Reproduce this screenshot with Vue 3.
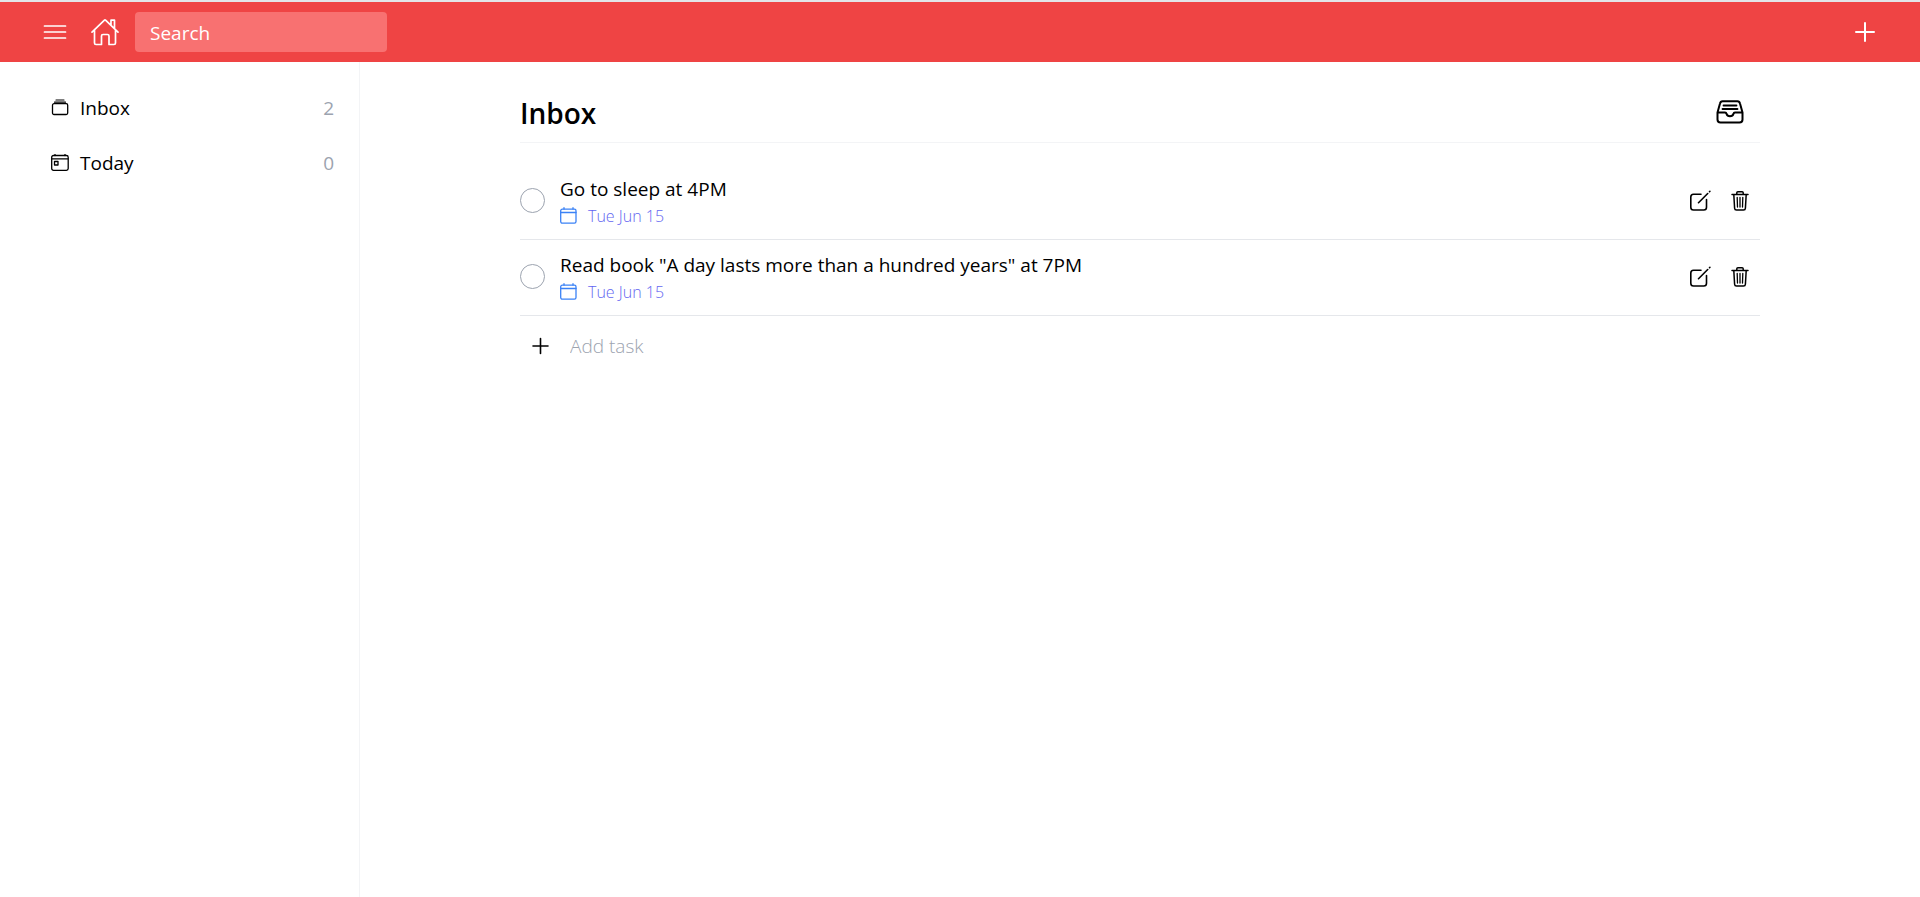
<script setup>
import { ref } from 'vue'

const search = ref('')
const newTask = ref('')
const lists = [
  { name: 'Inbox', count: 2, icon: 'stack' },
  { name: 'Today', count: 0, icon: 'day' },
]
const tasks = ref([
  { id: 1, title: 'Go to sleep at 4PM', date: 'Tue Jun 15', done: false },
  { id: 2, title: 'Read book "A day lasts more than a hundred years" at 7PM', date: 'Tue Jun 15', done: false },
])
</script>

<template>
  <div class="app">
    <header class="topbar">
      <button class="bar-btn menu" type="button" aria-label="Menu">
        <svg width="24" height="20" viewBox="0 0 24 20">
          <path d="M1.500 4h21M1.500 10h21M1.500 16h21" stroke-width="1.7" />
        </svg>
      </button>
      <a class="bar-btn home" href="#" aria-label="Home">
        <svg width="28" height="28" viewBox="0 0 28 28">
          <path d="M1 14.200 13.200 2.400q.8-.8 1.600 0L27 14.200M3.500 12v13q0 1.500 1.500 1.500h5.500v-8.500q0-1.500 1.500-1.500h4.500q1.500 0 1.500 1.500v8.500H23q1.500 0 1.500-1.500V12M20 7V2.200h3.500v8" stroke-width="1.7" />
        </svg>
      </a>
      <input v-model="search" class="search" type="text" placeholder="Search" aria-label="Search" />
      <button class="bar-btn add" type="button" aria-label="New task">
        <svg width="20" height="20" viewBox="0 0 20 20">
          <path d="M10 1v18M1 10h18" stroke-width="2" />
        </svg>
      </button>
    </header>

    <div class="body">
      <nav class="sidebar">
        <a v-for="list in lists" :key="list.name" class="list" href="#">
          <svg v-if="list.icon === 'stack'" width="18" height="18" viewBox="0 0 18 18">
            <path d="M5 1h8M3.500 3.200h11" stroke-width="1.200" />
            <rect x="1.500" y="4.700" width="15.200" height="10.800" rx="1.500" stroke-width="1.300" />
          </svg>
          <svg v-else width="18" height="18" viewBox="0 0 18 18">
            <rect x=".700" y="1.500" width="16.500" height="14.800" rx="1.800" stroke-width="1.300" />
            <path d="M1 4.800h16M4 .5v1M14 .5v1" stroke-width="1.300" />
            <rect x="3.500" y="7.500" width="3.500" height="3.500" stroke-width="1.300" />
          </svg>
          <span class="name">{{ list.name }}</span>
          <span class="count">{{ list.count }}</span>
        </a>
      </nav>

      <main class="main">
        <div class="heading">
          <h1>Inbox</h1>
          <button class="icon-btn tray" type="button" aria-label="Archive">
            <svg width="28" height="24" viewBox="0 0 28 24">
              <path d="M1.500 12.500 4 3.500Q4.500 1.200 6.500 1.200h15q2 0 2.500 2.300l2.500 9v7q0 3-3 3h-19q-3 0-3-3zM1.500 12.500h7.500q1.300 0 1.500 1.300a3.600 3.200 0 0 0 7 0q.2-1.300 1.500-1.300h7.500" stroke-width="2" />
              <path d="M7.500 5.500h13M6.500 9h15" stroke-width="1.800" />
            </svg>
          </button>
        </div>

        <ul class="tasks">
          <li v-for="task in tasks" :key="task.id" class="task">
            <input :id="'task-' + task.id" v-model="task.done" class="check" type="checkbox" />
            <div class="info">
              <label class="title" :for="'task-' + task.id">{{ task.title }}</label>
              <div class="date">
                <svg width="17" height="18" viewBox="0 0 17 18">
                  <rect x=".7" y="2.200" width="15.300" height="14" rx="1.600" stroke-width="1.3" />
                  <path d="M1 5.500h15M4 .7V2M13 .7V2" stroke-width="1.3" />
                </svg>
                <span>{{ task.date }}</span>
              </div>
            </div>
            <button class="icon-btn" type="button" aria-label="Edit task">
              <svg width="22" height="22" viewBox="0 0 22 22">
                <path d="M12 4.200H4.500Q1.800 4.200 1.800 6.900v10.400q0 2.700 2.700 2.700h10.300q2.700 0 2.700-2.700V9.500" stroke-width="1.600" />
                <path d="M9.500 12.700 18.700 3.500M20.500 1.700l.4-.4" stroke-width="1.600" />
              </svg>
            </button>
            <button class="icon-btn" type="button" aria-label="Delete task">
              <svg width="18" height="22" viewBox="0 0 18 22">
                <path d="M1 4.500h16M5.800 4.500V2.800q0-1.100 1.100-1.100h4.200q1.100 0 1.100 1.100v1.700M2.800 4.500l.8 13.700q.1 1.800 1.900 1.800h7q1.800 0 1.900-1.800l.8-13.700" stroke-width="1.500" />
                <path d="M6.200 7.500l.3 9.500M9 7.500v9.500M11.800 7.500l-.3 9.500" stroke-width="1.300" />
              </svg>
            </button>
          </li>
        </ul>

        <form class="new-task" @submit.prevent>
          <button class="icon-btn" type="submit" aria-label="Add task">
            <svg width="18" height="18" viewBox="0 0 18 18">
              <path d="M9.500 1.500v15M2 9h15" stroke-width="1.600" />
            </svg>
          </button>
          <input v-model="newTask" type="text" placeholder="Add task" aria-label="Task name" />
        </form>
      </main>
    </div>
  </div>
</template>

<style>
body {
  margin: 0;
  background: #fff;
}
</style>

<style scoped>
.app {
  display: flex;
  flex-direction: column;
  min-height: 100vh;
  box-sizing: border-box;
  border-top: 2px solid #e3e5e8;
  color: #000;
  font-family: "Segoe UI", "Open Sans", "Noto Sans", sans-serif;
  font-size: 19px;
  line-height: 28px;
}

svg {
  display: block;
  flex: none;
  fill: none;
  stroke: currentColor;
  stroke-linecap: round;
  stroke-linejoin: round;
}

button {
  padding: 0;
  border: 0;
  background: none;
  color: inherit;
  cursor: pointer;
}

input {
  font: inherit;
}

.topbar {
  display: flex;
  align-items: center;
  height: 60px;
  padding: 0 45px 0 43px;
  background: #ef4444;
  color: #fff;
}

.home {
  margin: 0 16px 0 24px;
  color: inherit;
}

.search {
  box-sizing: border-box;
  width: 252px;
  height: 40px;
  padding: 2px 15px 0;
  border: 0;
  border-radius: 4px;
  background: #f87171;
  color: #fff;
}

.search::placeholder {
  color: #fff;
  opacity: 1;
}

.add {
  margin-left: auto;
}

.body {
  display: flex;
  flex: 1;
}

.sidebar {
  display: flex;
  flex-direction: column;
  gap: 27px;
  box-sizing: border-box;
  width: 360px;
  padding: 32px 25px 32px 51px;
  border-right: 1px solid #f3f4f6;
}

.list {
  display: flex;
  align-items: center;
  gap: 11px;
  color: inherit;
  text-decoration: none;
}

.count {
  margin-left: auto;
  color: #9ca3af;
}

.main {
  flex: 1;
  padding: 32px 160px;
}

.heading {
  display: flex;
  align-items: center;
  justify-content: space-between;
  padding: 0 16px 10px 0;
  border-bottom: 1px solid #f3f4f6;
}

h1 {
  margin: 0;
  font-size: 28px;
  font-weight: 600;
  line-height: 38px;
}

.tray {
  margin-bottom: 2px;
}

.tasks {
  margin: 21px 0 0;
  padding: 0;
  list-style: none;
}

.task {
  display: flex;
  align-items: center;
  gap: 20px;
  padding: 11px 11px 10px 0;
  border-bottom: 1px solid #e5e7eb;
}

.check {
  flex: none;
  box-sizing: border-box;
  width: 25px;
  height: 25px;
  margin: 0 0 4px;
  border: 1px solid #9ca3af;
  border-radius: 50%;
  appearance: none;
}

.check:checked {
  background: #9ca3af;
}

.task .icon-btn {
  margin-bottom: 2px;
}

.info {
  flex: 1;
  margin-left: -5px;
}

.title {
  display: block;
}

.date {
  display: flex;
  align-items: center;
  gap: 11px;
  color: #3b82f6;
  font-size: 16px;
  font-weight: 300;
  line-height: 26px;
}

.date span {
  color: #6366f1;
}

.new-task {
  display: flex;
  align-items: center;
  gap: 21px;
  padding: 16px 11px;
}

.new-task input {
  flex: 1;
  height: 28px;
  padding: 0;
  border: 0;
  outline: 0;
  font-weight: 300;
}

.new-task input::placeholder {
  color: #9ca3af;
  opacity: 1;
}
</style>
